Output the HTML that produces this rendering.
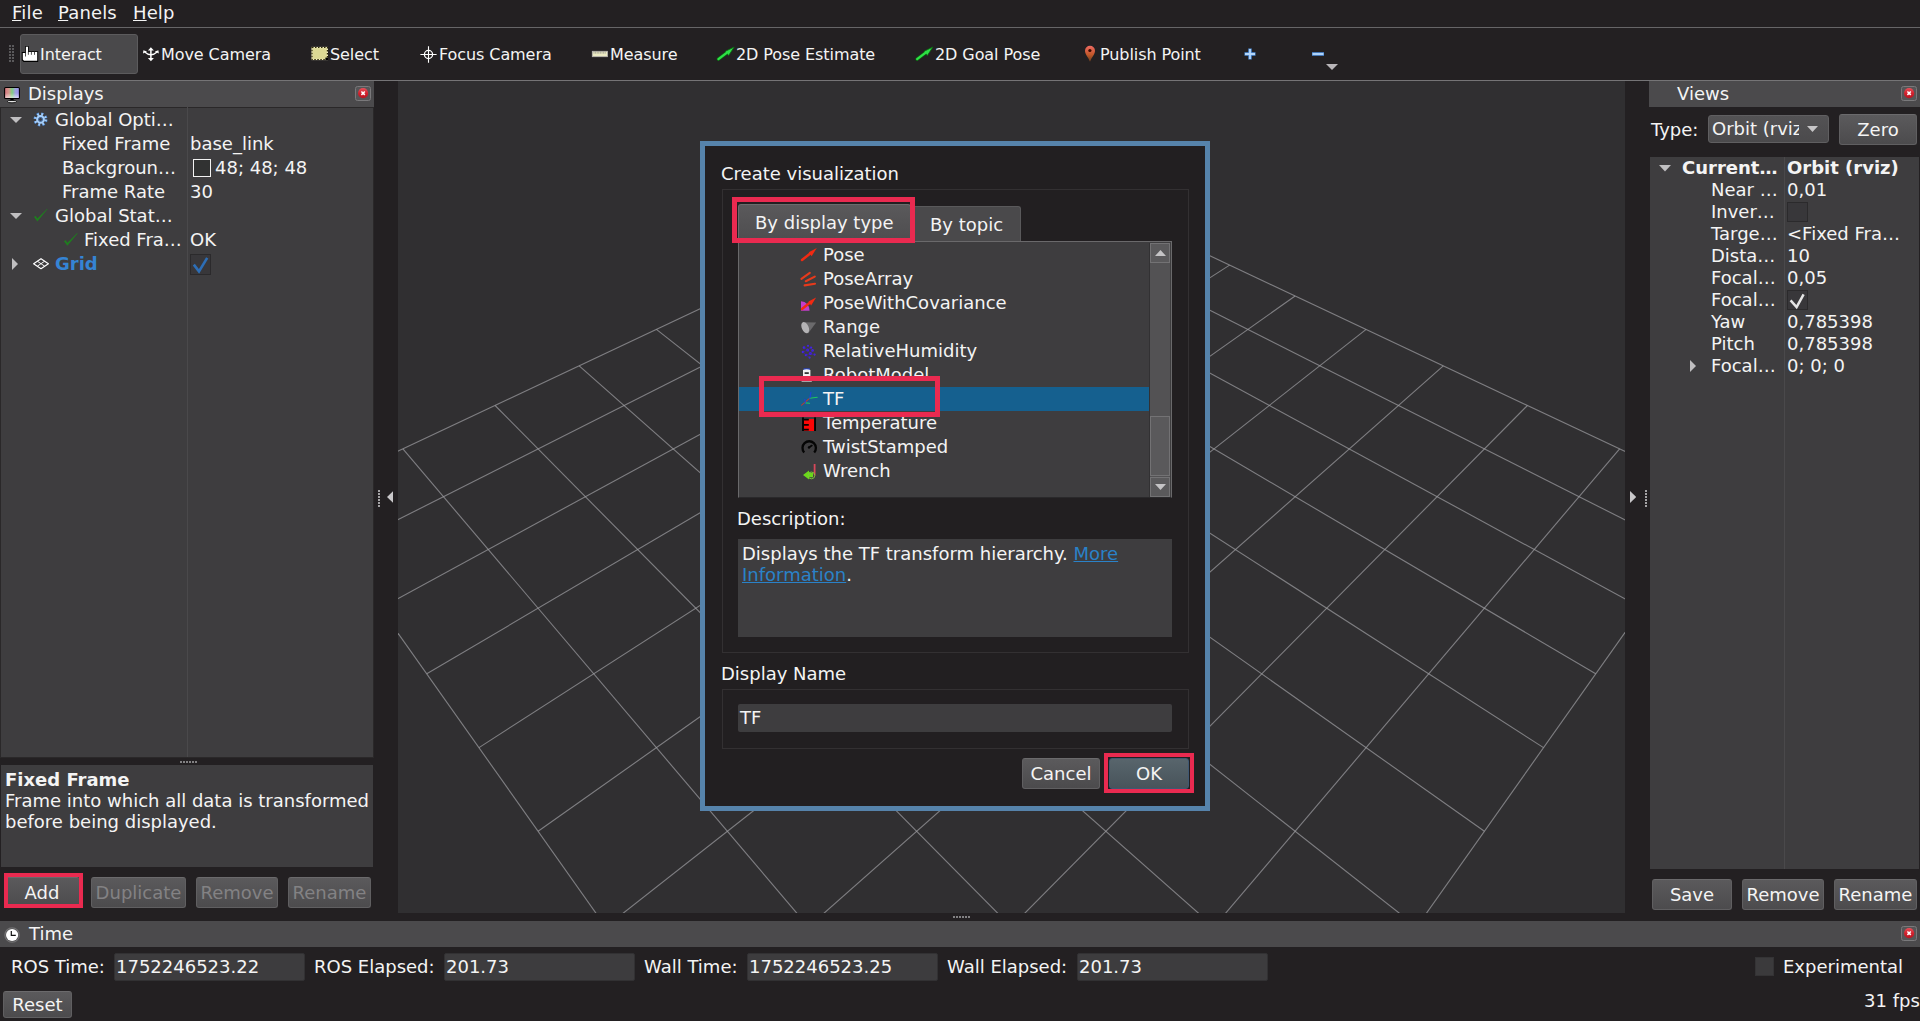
<!DOCTYPE html>
<html><head><meta charset="utf-8"><title>RViz</title>
<style>
html,body{margin:0;padding:0;}
body{width:1920px;height:1021px;overflow:hidden;background:#232022;color:#f4f4f4;font-family:"DejaVu Sans","Liberation Sans",sans-serif;font-size:18px;position:relative;}
body div, body svg{position:absolute;}
.t{white-space:nowrap;}
.b{white-space:nowrap;overflow:hidden;}
u{text-decoration:underline;text-underline-offset:1px;text-decoration-thickness:1px;}
</style></head><body>

<div class="t" style="left:12px;top:4px;font-size:18px;line-height:18px;letter-spacing:0.2px;"><u>F</u>ile</div>
<div class="t" style="left:58px;top:4px;font-size:18px;line-height:18px;letter-spacing:0.15px;"><u>P</u>anels</div>
<div class="t" style="left:133px;top:4px;font-size:18px;line-height:18px;letter-spacing:0.1px;"><u>H</u>elp</div>
<div style="left:0px;top:27px;width:1920px;height:1px;background:#666567"></div>
<div style="left:0px;top:80px;width:1920px;height:1px;background:#757476"></div>
<div style="left:9px;top:45px;width:2px;height:2px;background:#5a595b"></div>
<div style="left:9px;top:48px;width:2px;height:2px;background:#5a595b"></div>
<div style="left:9px;top:51px;width:2px;height:2px;background:#5a595b"></div>
<div style="left:9px;top:54px;width:2px;height:2px;background:#5a595b"></div>
<div style="left:9px;top:57px;width:2px;height:2px;background:#5a595b"></div>
<div style="left:9px;top:60px;width:2px;height:2px;background:#5a595b"></div>
<div style="left:12px;top:45px;width:2px;height:2px;background:#5a595b"></div>
<div style="left:12px;top:48px;width:2px;height:2px;background:#5a595b"></div>
<div style="left:12px;top:51px;width:2px;height:2px;background:#5a595b"></div>
<div style="left:12px;top:54px;width:2px;height:2px;background:#5a595b"></div>
<div style="left:12px;top:57px;width:2px;height:2px;background:#5a595b"></div>
<div style="left:12px;top:60px;width:2px;height:2px;background:#5a595b"></div>
<div style="left:20px;top:34px;width:118px;height:40px;background:#4a494b;border:1px solid #5c5b5d;border-radius:3px;box-sizing:border-box"></div>
<div class="t" style="left:40px;top:47px;font-size:16px;line-height:16px;letter-spacing:-0.08px;">Interact</div>
<div class="t" style="left:161px;top:47px;font-size:16px;line-height:16px;letter-spacing:-0.08px;">Move Camera</div>
<div class="t" style="left:330px;top:47px;font-size:16px;line-height:16px;letter-spacing:-0.08px;">Select</div>
<div class="t" style="left:439px;top:47px;font-size:16px;line-height:16px;letter-spacing:-0.08px;">Focus Camera</div>
<div class="t" style="left:610px;top:47px;font-size:16px;line-height:16px;letter-spacing:-0.08px;">Measure</div>
<div class="t" style="left:736px;top:47px;font-size:16px;line-height:16px;letter-spacing:-0.08px;">2D Pose Estimate</div>
<div class="t" style="left:935px;top:47px;font-size:16px;line-height:16px;letter-spacing:-0.08px;">2D Goal Pose</div>
<div class="t" style="left:1100px;top:47px;font-size:16px;line-height:16px;letter-spacing:-0.08px;">Publish Point</div>
<svg style="left:20px;top:44px" width="20" height="20" viewBox="20 44 20 20"><path d="M25.1 46.6 Q25.1 45.9 25.8 45.9 H28.1 Q28.8 45.9 28.8 46.6 V51.2 H38.2 V62.1 H23.6 L21.8 60.3 V52 H25.1 Z" fill="#000"/><path d="M25.9 46.7 H28 V52 H37.2 V60.7 H24 L22.8 59.5 V52.9 H25.9 Z" fill="#fff"/><path d="M25.5 53 V56.5 M28.4 51.6 V54.8 M31.4 51.6 V54.8 M34.5 51.6 V54.8" stroke="#222" stroke-width=".8"/></svg>
<svg style="left:141px;top:45px" width="20" height="18" viewBox="141 45 20 18"><g fill="#fff" stroke="none"><path d="M150.9 47.2 L153.9 50.5 H147.9 Z"/><path d="M150.9 61.2 L153.9 58 H147.9 Z"/><path d="M143 53.6 L143.4 50.2 L147 51.4 Z"/><path d="M158.8 53.6 L158.4 50.2 L154.8 51.4 Z"/></g><path d="M150.9 49.5 V59" stroke="#fff" stroke-width="1.5"/><path d="M144.8 52 Q150.9 57.6 157 52" fill="none" stroke="#fff" stroke-width="1.4"/></svg>
<svg style="left:310px;top:45px" width="20" height="17" viewBox="310 45 20 17"><rect x="312" y="47.5" width="15.4" height="12" fill="#dcd994"/><rect x="312" y="47.5" width="15.4" height="12" fill="none" stroke="#f3eec6" stroke-width="1.2"/><rect x="312" y="47.5" width="15.4" height="12" fill="none" stroke="#2c2800" stroke-width="1.2" stroke-dasharray="1.5 1.5"/><rect x="325.4" y="57.6" width="2.6" height="2.4" fill="#000"/></svg>
<svg style="left:419px;top:45px" width="20" height="20" viewBox="419 45 20 20"><g fill="none" stroke="#fff"><circle cx="428.5" cy="54.5" r="4.1" stroke-width="1.3"/><path d="M420.4 54.5 H436.6 M428.5 46.3 V62.8" stroke-width="1.1"/></g></svg>
<svg style="left:590px;top:49px" width="20" height="10" viewBox="590 49 20 10"><rect x="592.3" y="51.3" width="15.2" height="5.4" fill="#ecebc4" stroke="#b9b5b2" stroke-width=".8"/><path d="M594 51.5v2.2M595.6 51.5v2.2M597.2 51.5v2.2M598.8 51.5v2.2M600.4 51.5v2.2M602 51.5v2.2M603.6 51.5v2.2M605.2 51.5v2.2" stroke="#8a8783" stroke-width=".6"/></svg>
<svg style="left:716px;top:45px" width="20" height="18" viewBox="716 45 20 18"><path d="M718.4 59.2 L727.0 52.6" stroke="#0b6a12" stroke-width="3.4000000000000004" stroke-linecap="round"/><path d="M734.1999999999999 47.0 L725.4 51.300000000000004 L728.6 55.6 Z" fill="#2ee046" stroke="#0b6a12" stroke-width=".8"/><path d="M718.4 59.2 L727.0 52.6" stroke="#2ee046" stroke-width="2.2" stroke-linecap="round"/></svg>
<svg style="left:915px;top:45px" width="20" height="18" viewBox="915 45 20 18"><path d="M917.1 59.2 L925.7 52.6" stroke="#0b6a12" stroke-width="3.4000000000000004" stroke-linecap="round"/><path d="M932.9 47.0 L924.1 51.300000000000004 L927.3000000000001 55.6 Z" fill="#2ee046" stroke="#0b6a12" stroke-width=".8"/><path d="M917.1 59.2 L925.7 52.6" stroke="#2ee046" stroke-width="2.2" stroke-linecap="round"/></svg>
<svg style="left:1082px;top:44px" width="16" height="20" viewBox="1082 44 16 20"><defs><linearGradient id="pg" x1="0" y1="0" x2="0" y2="1"><stop offset="0" stop-color="#ee6a62"/><stop offset=".55" stop-color="#c4582a"/><stop offset="1" stop-color="#a85a20" stop-opacity=".55"/></linearGradient></defs><path d="M1090 61.8 C1088 56.5 1085 54.5 1085 50.8 A5 5 0 0 1 1095 50.8 C1095 54.5 1092 56.5 1090 61.8 Z" fill="url(#pg)"/><circle cx="1089.9" cy="50.5" r="1.6" fill="#3a0a00"/></svg>
<svg style="left:1243px;top:47px" width="14" height="14" viewBox="1243 47 14 14"><path d="M1244.5 54 H1255.5 M1250 48.5 V59.5" stroke="#4f8fdc" stroke-width="3.4"/><path d="M1245 54 H1255 M1250 49 V59" stroke="#b4d6fa" stroke-width="1.8"/></svg>
<svg style="left:1310px;top:50px" width="16" height="8" viewBox="1310 50 16 8"><path d="M1312 54 H1324" stroke="#4f8fdc" stroke-width="3.6"/><path d="M1312.6 54 H1323.4" stroke="#b4d6fa" stroke-width="1.9"/></svg>
<svg style="left:1326.0px;top:64.0px" width="12" height="6" viewBox="0 0 12 6"><path d="M0 0 H12 L6.0 6 Z" fill="#b9b6b9"/></svg>
<div style="left:0px;top:81px;width:374px;height:26px;background:#4b4a4c"></div>
<div class="t" style="left:28px;top:85px;font-size:18px;line-height:18px;">Displays</div>
<div style="left:355px;top:86px;width:16px;height:15px;background:#565557;border:1px solid #7a797b;box-sizing:border-box;border-radius:2.5px"></div>
<svg style="left:357px;top:87px" width="12" height="12" viewBox="0 0 12 12"><defs><linearGradient id="cg" x1="0" y1="0" x2="0" y2="1"><stop offset="0" stop-color="#e9505a"/><stop offset=".5" stop-color="#d2222e"/><stop offset="1" stop-color="#b81420"/></linearGradient></defs><circle cx="6.1" cy="6.2" r="5.1" fill="url(#cg)"/><path d="M4.4 4.5 L7.8 7.9 M7.8 4.5 L4.4 7.9" stroke="#fff" stroke-width="1.5"/></svg>
<div style="left:0px;top:107px;width:374px;height:651px;background:#2a2829"></div>
<div style="left:1px;top:108px;width:372px;height:649px;background:#3e3d3f"></div>
<div style="left:187px;top:107px;width:1px;height:650px;background:#4a494b"></div>
<div class="t" style="left:55px;top:111px;font-size:18px;line-height:18px;">Global Opti…</div>
<div class="t" style="left:62px;top:135px;font-size:18px;line-height:18px;">Fixed Frame</div>
<div class="t" style="left:190px;top:135px;font-size:18px;line-height:18px;">base_link</div>
<div class="t" style="left:62px;top:159px;font-size:18px;line-height:18px;">Backgroun…</div>
<div class="t" style="left:215px;top:159px;font-size:18px;line-height:18px;">48; 48; 48</div>
<div class="t" style="left:62px;top:183px;font-size:18px;line-height:18px;">Frame Rate</div>
<div class="t" style="left:190px;top:183px;font-size:18px;line-height:18px;">30</div>
<div class="t" style="left:55px;top:207px;font-size:18px;line-height:18px;">Global Stat…</div>
<div class="t" style="left:84px;top:231px;font-size:18px;line-height:18px;">Fixed Fra…</div>
<div class="t" style="left:190px;top:231px;font-size:18px;line-height:18px;">OK</div>
<div class="t" style="left:55px;top:255px;font-size:18px;line-height:18px;color:#3584d4;font-weight:bold;">Grid</div>
<svg style="left:9.5px;top:117.0px" width="12" height="6" viewBox="0 0 12 6"><path d="M0 0 H12 L6.0 6 Z" fill="#c0bfc1"/></svg>
<svg style="left:9.5px;top:213.0px" width="12" height="6" viewBox="0 0 12 6"><path d="M0 0 H12 L6.0 6 Z" fill="#c0bfc1"/></svg>
<svg style="left:12.2px;top:258.0px" width="6" height="12" viewBox="0 0 6 12"><path d="M0 0 V12 L6 6.0 Z" fill="#c0bfc1"/></svg>
<div style="left:193px;top:159px;width:18px;height:18px;background:#313232;border:1.5px solid #f2f2f2;box-sizing:border-box"></div>
<div style="left:190px;top:254px;width:21px;height:21px;background:#38373a;border:1px solid #2b2a2c;box-sizing:border-box"></div>
<svg style="left:191px;top:255px" width="20" height="20" viewBox="0 0 20 20"><path d="M2.8 9.6 L8 16.4 L16.2 2.8" fill="none" stroke="#2d6eb6" stroke-width="2.6"/></svg>
<svg style="left:3px;top:86px" width="18" height="18" viewBox="3 86 18 18"><defs><linearGradient id="mg" x1="0" y1="0" x2="1" y2="0"><stop offset="0" stop-color="#d8737c"/><stop offset=".3" stop-color="#d49a90"/><stop offset=".5" stop-color="#7fd07e"/><stop offset=".72" stop-color="#9fa4dc"/><stop offset="1" stop-color="#9a90ee"/></linearGradient><linearGradient id="mw" x1="0" y1="0" x2="0" y2="1"><stop offset=".5" stop-color="#fff" stop-opacity="0"/><stop offset="1" stop-color="#fff" stop-opacity=".6"/></linearGradient></defs><rect x="4.6" y="87.5" width="14.8" height="11" rx="1" fill="url(#mg)" stroke="#000" stroke-width="1.1"/><rect x="5.2" y="88" width="13.6" height="10" fill="url(#mw)"/><path d="M10.4 99 H13.6 V100.8 H10.4 Z" fill="#000"/><ellipse cx="12" cy="101.6" rx="4.6" ry="1.2" fill="#e8e8e8" stroke="#000" stroke-width=".8"/></svg>
<svg style="left:32px;top:111px" width="17" height="17" viewBox="32 111 17 17"><g fill="none"><circle cx="40.5" cy="119.4" r="5.4" stroke="#4a86d0" stroke-width="3.2" stroke-dasharray="2.2 2.04"/><circle cx="40.5" cy="119.4" r="5.3" stroke="#a8cff8" stroke-width="2.2" stroke-dasharray="1.6 2.56" stroke-dashoffset="-.3"/><circle cx="40.5" cy="119.4" r="3.3" stroke="#a8cff8" stroke-width="2.2"/><circle cx="40.5" cy="119.4" r="1.9" stroke="#3b6fb4" stroke-width=".9"/></g></svg>
<svg style="left:33px;top:206px" width="17" height="17" viewBox="33 206 17 17"><path d="M34 216.9 L35.6 215.70000000000002 L37.4 218.5 L47.2 208.70000000000002 L47.6 209.1 L37.4 221.5 Z" fill="#1f7d1f"/></svg>
<svg style="left:63px;top:231px" width="17" height="17" viewBox="63 231 17 17"><path d="M64 241.2 L65.6 240.0 L67.4 242.79999999999998 L77.2 233.0 L77.6 233.39999999999998 L67.4 245.79999999999998 Z" fill="#1f7d1f"/></svg>
<svg style="left:32px;top:256px" width="18" height="16" viewBox="32 256 18 16"><g fill="none" stroke="#fff" stroke-linejoin="round"><path d="M41 258.7 L48.4 263.7 L41 268.7 L33.6 263.7 Z" stroke-width="1.15"/><path d="M37.3 261.2 L44.7 266.2 M44.7 261.2 L37.3 266.2" stroke-width=".95"/></g></svg>
<div style="left:180px;top:761px;width:2px;height:2px;background:#828183"></div>
<div style="left:183px;top:761px;width:2px;height:2px;background:#828183"></div>
<div style="left:186px;top:761px;width:2px;height:2px;background:#828183"></div>
<div style="left:189px;top:761px;width:2px;height:2px;background:#828183"></div>
<div style="left:192px;top:761px;width:2px;height:2px;background:#828183"></div>
<div style="left:195px;top:761px;width:2px;height:2px;background:#828183"></div>
<div style="left:1px;top:765px;width:372px;height:102px;background:#3e3d3f"></div>
<div class="t" style="left:5px;top:771px;font-size:18px;line-height:18px;font-weight:bold;">Fixed Frame</div>
<div class="t" style="left:5px;top:792px;font-size:18px;line-height:18px;">Frame into which all data is transformed</div>
<div class="t" style="left:5px;top:813px;font-size:18px;line-height:18px;">before being displayed.</div>
<div class="b" style="left:4px;top:877px;width:76px;height:31px;background:linear-gradient(#5b5a5c,#4c4b4d);border:1px solid #605f61;border-top-color:#6b6a6c;border-radius:3px;box-sizing:border-box;color:#f4f4f4;text-align:center;font-size:18px;line-height:29px;">Add</div>
<div class="b" style="left:91px;top:877px;width:95px;height:31px;background:linear-gradient(#5b5a5c,#4c4b4d);border:1px solid #605f61;border-top-color:#6b6a6c;border-radius:3px;box-sizing:border-box;color:#838284;text-align:center;font-size:18px;line-height:29px;">Duplicate</div>
<div class="b" style="left:196px;top:877px;width:82px;height:31px;background:linear-gradient(#5b5a5c,#4c4b4d);border:1px solid #605f61;border-top-color:#6b6a6c;border-radius:3px;box-sizing:border-box;color:#838284;text-align:center;font-size:18px;line-height:29px;">Remove</div>
<div class="b" style="left:288px;top:877px;width:83px;height:31px;background:linear-gradient(#5b5a5c,#4c4b4d);border:1px solid #605f61;border-top-color:#6b6a6c;border-radius:3px;box-sizing:border-box;color:#838284;text-align:center;font-size:18px;line-height:29px;">Rename</div>
<div style="left:3.5px;top:872.5px;width:79.5px;height:35.3px;border:4.5px solid #ea2a50;box-sizing:border-box"></div>
<svg style="left:387.0px;top:491.0px" width="6.2" height="12" viewBox="0 0 6.2 12"><path d="M6.2 0 V12 L0 6.0 Z" fill="#c9c8ca"/></svg>
<svg style="left:1629.9px;top:491.0px" width="6.2" height="12" viewBox="0 0 6.2 12"><path d="M0 0 V12 L6.2 6.0 Z" fill="#c9c8ca"/></svg>
<div style="left:378px;top:490px;width:2px;height:2px;background:#a4a3a5"></div>
<div style="left:1645px;top:490px;width:2px;height:2px;background:#a4a3a5"></div>
<div style="left:378px;top:493px;width:2px;height:2px;background:#a4a3a5"></div>
<div style="left:1645px;top:493px;width:2px;height:2px;background:#a4a3a5"></div>
<div style="left:378px;top:496px;width:2px;height:2px;background:#a4a3a5"></div>
<div style="left:1645px;top:496px;width:2px;height:2px;background:#a4a3a5"></div>
<div style="left:378px;top:499px;width:2px;height:2px;background:#a4a3a5"></div>
<div style="left:1645px;top:499px;width:2px;height:2px;background:#a4a3a5"></div>
<div style="left:378px;top:502px;width:2px;height:2px;background:#a4a3a5"></div>
<div style="left:1645px;top:502px;width:2px;height:2px;background:#a4a3a5"></div>
<div style="left:378px;top:505px;width:2px;height:2px;background:#a4a3a5"></div>
<div style="left:1645px;top:505px;width:2px;height:2px;background:#a4a3a5"></div>
<div style="left:398px;top:81px;width:1227px;height:832px;background:#302f31"></div>
<svg style="left:398px;top:81px;overflow:hidden" width="1227" height="832" viewBox="398 81 1227 832"><g stroke="#a0a0a4" stroke-opacity="0.7" stroke-width="1.12" fill="none"><line x1="1011.2" y1="162.1" x2="1721.0" y2="496.7"/><line x1="1011.2" y1="162.1" x2="301.5" y2="496.7"/><line x1="962.3" y1="185.2" x2="1683.6" y2="549.5"/><line x1="1060.2" y1="185.2" x2="338.9" y2="549.5"/><line x1="909.9" y1="209.9" x2="1642.1" y2="608.2"/><line x1="1112.6" y1="209.9" x2="380.4" y2="608.2"/><line x1="853.5" y1="236.5" x2="1595.7" y2="673.8"/><line x1="1169.0" y1="236.5" x2="426.8" y2="673.8"/><line x1="792.9" y1="265.1" x2="1543.5" y2="747.6"/><line x1="1229.6" y1="265.1" x2="479.0" y2="747.6"/><line x1="727.4" y1="296.0" x2="1484.4" y2="831.3"/><line x1="1295.1" y1="296.0" x2="538.1" y2="831.3"/><line x1="656.4" y1="329.4" x2="1416.8" y2="926.9"/><line x1="1366.1" y1="329.4" x2="605.7" y2="926.9"/><line x1="579.2" y1="365.8" x2="1338.8" y2="1037.2"/><line x1="1443.3" y1="365.8" x2="683.7" y2="1037.2"/><line x1="495.1" y1="405.5" x2="1247.8" y2="1165.8"/><line x1="1527.4" y1="405.5" x2="774.7" y2="1165.8"/><line x1="402.9" y1="448.9" x2="1140.3" y2="1317.9"/><line x1="1619.6" y1="448.9" x2="882.2" y2="1317.9"/><line x1="301.5" y1="496.7" x2="1011.2" y2="1500.4"/><line x1="1721.0" y1="496.7" x2="1011.2" y2="1500.4"/></g></svg>
<div style="left:1649px;top:81px;width:271px;height:26px;background:#4b4a4c"></div>
<div class="t" style="left:1677px;top:85px;font-size:18px;line-height:18px;">Views</div>
<div style="left:1901px;top:86px;width:16px;height:15px;background:#565557;border:1px solid #7a797b;box-sizing:border-box;border-radius:2.5px"></div>
<svg style="left:1903px;top:87px" width="12" height="12" viewBox="0 0 12 12"><defs><linearGradient id="cg" x1="0" y1="0" x2="0" y2="1"><stop offset="0" stop-color="#e9505a"/><stop offset=".5" stop-color="#d2222e"/><stop offset="1" stop-color="#b81420"/></linearGradient></defs><circle cx="6.1" cy="6.2" r="5.1" fill="url(#cg)"/><path d="M4.4 4.5 L7.8 7.9 M7.8 4.5 L4.4 7.9" stroke="#fff" stroke-width="1.5"/></svg>
<div class="t" style="left:1651px;top:121px;font-size:18px;line-height:18px;">Type:</div>
<div style="left:1708px;top:115px;width:121px;height:28px;background:linear-gradient(#535254,#4b4a4c);border:1px solid #605f61;border-radius:3px;box-sizing:border-box"></div>
<div class="t" style="left:1712px;top:120px;font-size:18px;line-height:18px;width:87px;overflow:hidden;">Orbit (rviz</div>
<svg style="left:1807.0px;top:126.0px" width="11" height="6" viewBox="0 0 11 6"><path d="M0 0 H11 L5.5 6 Z" fill="#c6c5c7"/></svg>
<div class="b" style="left:1839px;top:114px;width:78px;height:31px;background:linear-gradient(#5b5a5c,#4c4b4d);border:1px solid #605f61;border-top-color:#6b6a6c;border-radius:3px;box-sizing:border-box;color:#f4f4f4;text-align:center;font-size:18px;line-height:29px;">Zero</div>
<div style="left:1650px;top:157px;width:269px;height:712px;background:#3e3d3f"></div>
<div style="left:1784px;top:157px;width:1px;height:712px;background:#4a494b"></div>
<div class="t" style="left:1682px;top:159px;font-size:18px;line-height:18px;font-weight:bold;">Current…</div>
<div class="t" style="left:1787px;top:159px;font-size:18px;line-height:18px;font-weight:bold;">Orbit (rviz)</div>
<div class="t" style="left:1711px;top:181px;font-size:18px;line-height:18px;">Near …</div>
<div class="t" style="left:1787px;top:181px;font-size:18px;line-height:18px;">0,01</div>
<div class="t" style="left:1711px;top:203px;font-size:18px;line-height:18px;">Inver…</div>
<div class="t" style="left:1711px;top:225px;font-size:18px;line-height:18px;">Targe…</div>
<div class="t" style="left:1787px;top:225px;font-size:18px;line-height:18px;">&lt;Fixed Fra…</div>
<div class="t" style="left:1711px;top:247px;font-size:18px;line-height:18px;">Dista…</div>
<div class="t" style="left:1787px;top:247px;font-size:18px;line-height:18px;">10</div>
<div class="t" style="left:1711px;top:269px;font-size:18px;line-height:18px;">Focal…</div>
<div class="t" style="left:1787px;top:269px;font-size:18px;line-height:18px;">0,05</div>
<div class="t" style="left:1711px;top:291px;font-size:18px;line-height:18px;">Focal…</div>
<div class="t" style="left:1711px;top:313px;font-size:18px;line-height:18px;">Yaw</div>
<div class="t" style="left:1787px;top:313px;font-size:18px;line-height:18px;">0,785398</div>
<div class="t" style="left:1711px;top:335px;font-size:18px;line-height:18px;">Pitch</div>
<div class="t" style="left:1787px;top:335px;font-size:18px;line-height:18px;">0,785398</div>
<div class="t" style="left:1711px;top:357px;font-size:18px;line-height:18px;">Focal…</div>
<div class="t" style="left:1787px;top:357px;font-size:18px;line-height:18px;">0; 0; 0</div>
<svg style="left:1658.5px;top:165.05px" width="12" height="6.5" viewBox="0 0 12 6.5"><path d="M0 0 H12 L6.0 6.5 Z" fill="#c0bfc1"/></svg>
<svg style="left:1690.0px;top:360.0px" width="6" height="12" viewBox="0 0 6 12"><path d="M0 0 V12 L6 6.0 Z" fill="#c0bfc1"/></svg>
<div style="left:1787px;top:202px;width:21px;height:20px;background:#38373a;border:1px solid #2b2a2c;box-sizing:border-box"></div>
<div style="left:1787px;top:290px;width:21px;height:20px;background:#38373a;border:1px solid #2b2a2c;box-sizing:border-box"></div>
<svg style="left:1788px;top:290px" width="20" height="20" viewBox="0 0 20 20"><path d="M2.6 10.4 L8.6 17 L15.6 4.4" fill="none" stroke="#e4e4e4" stroke-width="2.5"/></svg>
<div class="b" style="left:1652px;top:879px;width:80px;height:31px;background:linear-gradient(#5b5a5c,#4c4b4d);border:1px solid #605f61;border-top-color:#6b6a6c;border-radius:3px;box-sizing:border-box;color:#f4f4f4;text-align:center;font-size:18px;line-height:29px;">Save</div>
<div class="b" style="left:1742px;top:879px;width:82px;height:31px;background:linear-gradient(#5b5a5c,#4c4b4d);border:1px solid #605f61;border-top-color:#6b6a6c;border-radius:3px;box-sizing:border-box;color:#f4f4f4;text-align:center;font-size:18px;line-height:29px;">Remove</div>
<div class="b" style="left:1834px;top:879px;width:83px;height:31px;background:linear-gradient(#5b5a5c,#4c4b4d);border:1px solid #605f61;border-top-color:#6b6a6c;border-radius:3px;box-sizing:border-box;color:#f4f4f4;text-align:center;font-size:18px;line-height:29px;">Rename</div>
<div style="left:953px;top:916px;width:2px;height:2px;background:#828183"></div>
<div style="left:956px;top:916px;width:2px;height:2px;background:#828183"></div>
<div style="left:959px;top:916px;width:2px;height:2px;background:#828183"></div>
<div style="left:962px;top:916px;width:2px;height:2px;background:#828183"></div>
<div style="left:965px;top:916px;width:2px;height:2px;background:#828183"></div>
<div style="left:968px;top:916px;width:2px;height:2px;background:#828183"></div>
<div style="left:0px;top:921px;width:1920px;height:26px;background:#4b4a4c"></div>
<svg style="left:4px;top:927px" width="16" height="16" viewBox="4 927 16 16"><circle cx="12.1" cy="935" r="7.2" fill="none" stroke="#fff" stroke-opacity=".22" stroke-width="1.2"/><circle cx="12.1" cy="935" r="6.1" fill="#fff"/><path d="M11.3 931 V935.4 H15.8" fill="none" stroke="#111" stroke-width="1.2"/></svg>
<div class="t" style="left:29px;top:925px;font-size:18px;line-height:18px;">Time</div>
<div style="left:1901px;top:926px;width:16px;height:15px;background:#565557;border:1px solid #7a797b;box-sizing:border-box;border-radius:2.5px"></div>
<svg style="left:1903px;top:927px" width="12" height="12" viewBox="0 0 12 12"><defs><linearGradient id="cg" x1="0" y1="0" x2="0" y2="1"><stop offset="0" stop-color="#e9505a"/><stop offset=".5" stop-color="#d2222e"/><stop offset="1" stop-color="#b81420"/></linearGradient></defs><circle cx="6.1" cy="6.2" r="5.1" fill="url(#cg)"/><path d="M4.4 4.5 L7.8 7.9 M7.8 4.5 L4.4 7.9" stroke="#fff" stroke-width="1.5"/></svg>
<div class="t" style="left:11px;top:958px;font-size:18px;line-height:18px;">ROS Time:</div>
<div style="left:114px;top:953px;width:191px;height:28px;background:#3d3c3e;border:1px solid #323133;box-sizing:border-box;border-radius:2px"></div>
<div class="t" style="left:116px;top:958px;font-size:18px;line-height:18px;">1752246523.22</div>
<div class="t" style="left:314px;top:958px;font-size:18px;line-height:18px;">ROS Elapsed:</div>
<div style="left:444px;top:953px;width:191px;height:28px;background:#3d3c3e;border:1px solid #323133;box-sizing:border-box;border-radius:2px"></div>
<div class="t" style="left:446px;top:958px;font-size:18px;line-height:18px;">201.73</div>
<div class="t" style="left:644px;top:958px;font-size:18px;line-height:18px;">Wall Time:</div>
<div style="left:747px;top:953px;width:191px;height:28px;background:#3d3c3e;border:1px solid #323133;box-sizing:border-box;border-radius:2px"></div>
<div class="t" style="left:749px;top:958px;font-size:18px;line-height:18px;">1752246523.25</div>
<div class="t" style="left:947px;top:958px;font-size:18px;line-height:18px;">Wall Elapsed:</div>
<div style="left:1077px;top:953px;width:191px;height:28px;background:#3d3c3e;border:1px solid #323133;box-sizing:border-box;border-radius:2px"></div>
<div class="t" style="left:1079px;top:958px;font-size:18px;line-height:18px;">201.73</div>
<div style="left:1755px;top:957px;width:19px;height:19px;background:#3b3a3c;border:1px solid #343335;box-sizing:border-box"></div>
<div class="t" style="left:1783px;top:958px;font-size:18px;line-height:18px;">Experimental</div>
<div class="b" style="left:3px;top:991px;width:69px;height:27px;background:linear-gradient(#5b5a5c,#4c4b4d);border:1px solid #605f61;border-top-color:#6b6a6c;border-radius:3px;box-sizing:border-box;color:#f4f4f4;text-align:center;font-size:18px;line-height:25px;">Reset</div>
<div class="t" style="left:1864px;top:992px;font-size:18px;line-height:18px;">31 fps</div>
<div style="left:700px;top:141px;width:510px;height:670px;background:#221f21;border:5px solid #5683ab;box-sizing:border-box"></div>
<div class="t" style="left:721px;top:165px;font-size:18px;line-height:18px;">Create visualization</div>
<div style="left:722px;top:189px;width:467px;height:464px;border:1px solid #333032;box-sizing:border-box"></div>
<div style="left:738px;top:204px;width:173px;height:38px;background:linear-gradient(#5a595b,#4e4d4f);border:1px solid #6c6b6d;border-bottom:none;box-sizing:border-box;border-radius:3px 3px 0 0"></div>
<div class="t" style="left:755px;top:214px;font-size:18px;line-height:18px;">By display type</div>
<div style="left:911px;top:206px;width:110px;height:36px;background:#4a494b;border:1px solid #5a595b;border-bottom:none;box-sizing:border-box;border-radius:3px 3px 0 0"></div>
<div class="t" style="left:930px;top:216px;font-size:18px;line-height:18px;">By topic</div>
<div style="left:738px;top:241px;width:434px;height:257px;background:#3e3d3f;border:1px solid #6a696b;border-bottom-color:#2a292b;box-sizing:border-box"></div>
<div style="left:739px;top:387px;width:411px;height:24px;background:#15608f"></div>
<div class="t" style="left:823px;top:246px;font-size:18px;line-height:18px;">Pose</div>
<div class="t" style="left:823px;top:270px;font-size:18px;line-height:18px;">PoseArray</div>
<div class="t" style="left:823px;top:294px;font-size:18px;line-height:18px;">PoseWithCovariance</div>
<div class="t" style="left:823px;top:318px;font-size:18px;line-height:18px;">Range</div>
<div class="t" style="left:823px;top:342px;font-size:18px;line-height:18px;">RelativeHumidity</div>
<div class="t" style="left:823px;top:366px;font-size:18px;line-height:18px;">RobotModel</div>
<div class="t" style="left:823px;top:390px;font-size:18px;line-height:18px;">TF</div>
<div class="t" style="left:823px;top:414px;font-size:18px;line-height:18px;">Temperature</div>
<div class="t" style="left:823px;top:438px;font-size:18px;line-height:18px;">TwistStamped</div>
<div class="t" style="left:823px;top:462px;font-size:18px;line-height:18px;">Wrench</div>
<div style="left:1149px;top:243px;width:21px;height:254px;background:#535254;border-left:1px solid #323133;box-sizing:border-box"></div>
<div style="left:1150px;top:243px;width:20px;height:20px;background:#5a595b;border:1px solid #737274;box-sizing:border-box"></div>
<svg style="left:1154.5px;top:250.0px" width="11" height="6" viewBox="0 0 11 6"><path d="M0 6 H11 L5.5 0 Z" fill="#c4c3c5"/></svg>
<div style="left:1150px;top:416px;width:20px;height:60px;background:#5a595b;border:1px solid #737274;box-sizing:border-box"></div>
<div style="left:1150px;top:477px;width:20px;height:20px;background:#5a595b;border:1px solid #737274;box-sizing:border-box"></div>
<svg style="left:1154.5px;top:484.0px" width="11" height="6" viewBox="0 0 11 6"><path d="M0 0 H11 L5.5 6 Z" fill="#c4c3c5"/></svg>
<svg style="left:800px;top:246.39999999999998px" width="20" height="18" viewBox="800 246.39999999999998 20 18"><path d="M802 260.4 L810.2 253.9" stroke="#f22a12" stroke-width="2.5" stroke-linecap="round"/><path d="M816.8 248.4 L808.8 252.6 L811.6 256.6 Z" fill="#f22a12"/></svg>
<svg style="left:799px;top:270px" width="19" height="18" viewBox="799 270 19 18"><g stroke="#e63a1c" stroke-width="2.1" stroke-linecap="round"><path d="M801.4 278.8 L809.8 272.8"/><path d="M805.8 281.2 L814.8 276.6"/><path d="M804.6 285.4 L815 283.7"/></g></svg>
<svg style="left:800px;top:298px" width="18" height="16" viewBox="800 298 18 16"><path d="M801 301.2 A9 9 0 0 1 809.6 310.8 H801 Z" fill="#c23ecb"/></svg>
<svg style="left:800px;top:295.2px" width="20" height="18" viewBox="800 295.2 20 18"><path d="M802 309.2 L809.8 303.0" stroke="#f22a12" stroke-width="2.4" stroke-linecap="round"/><path d="M816.1 297.8 L808.5 301.8 L811.1 305.6 Z" fill="#f22a12"/></svg>
<svg style="left:800px;top:320px" width="18" height="16" viewBox="800 320 18 16"><path d="M805 322.2 L816.2 322.4 L808 333.4 Z" fill="#6b6a6c"/><ellipse cx="805.2" cy="327.6" rx="3.4" ry="5.9" transform="rotate(-24 805.2 327.6)" fill="#b4b3b5"/></svg>
<svg style="left:800px;top:343px" width="18" height="17" viewBox="800 343 18 17"><g fill="#4524e2"><circle cx="808" cy="345.8" r="1.1"/><circle cx="804" cy="347.6" r="1.3"/><circle cx="811" cy="347.6" r="1.2"/><circle cx="807.6" cy="350" r="1.5"/><circle cx="803" cy="352" r="1.3"/><circle cx="812.6" cy="350.4" r="1.3"/><circle cx="810.4" cy="353.6" r="1.5"/><circle cx="806" cy="355" r="1.3"/><circle cx="814.6" cy="354.6" r="1.1"/><circle cx="809.6" cy="357.6" r="1.1"/></g><g stroke="#3a1fc0" stroke-width=".7" opacity=".8" fill="none"><path d="M804 347.6L807.6 350L811 347.6M807.6 350L810.4 353.6L806 355L803 352L807.6 350M810.4 353.6L812.6 350.4M810.4 353.6L814.6 354.6M806 355L809.6 357.6"/></g></svg>
<svg style="left:800px;top:366px" width="14" height="18" viewBox="800 366 14 18"><path d="M803.6 368.4 H809.8 V370 H803.6 Z" fill="#2848d8"/><path d="M803 370 Q806.7 368.6 810.4 370 V376.4 H803 Z" fill="#f2f2f2"/><path d="M804.6 372.2 H808.8 V374 H804.6 Z" fill="#333"/><path d="M801.6 378.2 H811.8 V381.6 H801.6 Z" fill="#ececec"/><path d="M803.4 379 v2 M806.7 379 v2 M810 379 v2" stroke="#444" stroke-width=".8"/></svg>
<svg style="left:800px;top:390px" width="19" height="17" viewBox="800 390 19 17"><g fill="none" stroke-width="1.1" stroke-linecap="round" opacity=".9"><path d="M809.8 398.2 L801.6 405.2" stroke="#c8382e"/><path d="M809.8 398.2 L817.2 397.2" stroke="#22d45a"/><path d="M809.8 398.2 L810.9 392.4" stroke="#1f3ee8"/><path d="M805.4 402.9 L809.6 403.2" stroke="#22d45a"/><path d="M805.4 402.9 L804.8 399.2" stroke="#1f3ee8"/></g></svg>
<svg style="left:801px;top:416px" width="16" height="16" viewBox="801 416 16 16"><rect x="803.6" y="419" width="10.8" height="12" fill="#fb0606"/><rect x="802" y="417.4" width="2" height="13.6" fill="#050505"/><rect x="814.1" y="417.4" width="1.9" height="13.6" fill="#050505"/><path d="M804 419.6 H808.8 M804 424.9 H808.8 M804 429.6 H808.8" stroke="#0a0000" stroke-width="1.9"/></svg>
<svg style="left:800px;top:438px" width="18" height="17" viewBox="800 438 18 17"><path d="M804.2 452.4 A6.7 6.7 0 1 1 814.2 452.4" fill="none" stroke="#050505" stroke-width="2.3"/><path d="M809 447.4 L811.8 445.6" stroke="#050505" stroke-width="1.8" stroke-linecap="round"/><circle cx="809" cy="447.4" r="1.2" fill="#050505"/></svg>
<svg style="left:800px;top:462px" width="18" height="18" viewBox="800 462 18 18"><path d="M814.6 464 V475.4" stroke="#d8485a" stroke-width="1.8"/><path d="M803 475 L809 470.6 V472.8 H813 V477.2 H809 V479.4 Z" fill="#6ad81a"/><circle cx="811.4" cy="475.4" r="3.4" fill="none" stroke="#7ec83a" stroke-width=".9"/></svg>
<div style="left:732px;top:196.5px;width:183px;height:46.5px;border:5px solid #ea2a50;box-sizing:border-box"></div>
<div style="left:759px;top:376px;width:181px;height:41px;border:5px solid #ea2a50;box-sizing:border-box"></div>
<div class="t" style="left:737px;top:510px;font-size:18px;line-height:18px;">Description:</div>
<div style="left:738px;top:539px;width:434px;height:98px;background:#3e3d3f"></div>
<div class="t" style="left:742px;top:543px;font-size:18px;line-height:21px;white-space:normal;width:425px">Displays the TF transform hierarchy. <span style="color:#2a82c8;text-decoration:underline">More Information</span>.</div>
<div class="t" style="left:721px;top:665px;font-size:18px;line-height:18px;">Display Name</div>
<div style="left:722px;top:689px;width:467px;height:60px;border:1px solid #333032;box-sizing:border-box"></div>
<div style="left:738px;top:704px;width:434px;height:28px;background:#3e3d3f;border-radius:2px"></div>
<div class="t" style="left:740px;top:709px;font-size:18px;line-height:18px;">TF</div>
<div class="b" style="left:1022px;top:758px;width:78px;height:31px;background:linear-gradient(#5b5a5c,#4c4b4d);border:1px solid #605f61;border-top-color:#6b6a6c;border-radius:3px;box-sizing:border-box;color:#f4f4f4;text-align:center;font-size:18px;line-height:29px;">Cancel</div>
<div class="b" style="left:1109px;top:758px;width:80px;height:31px;background:linear-gradient(#5b5a5c,#4c4b4d);border:1px solid #605f61;border-top-color:#6b6a6c;border-radius:3px;box-sizing:border-box;color:#f4f4f4;text-align:center;font-size:18px;line-height:29px;background:linear-gradient(#58656c,#48545b);border-color:#3f5873;">OK</div>
<div style="left:1104px;top:753px;width:90px;height:40px;border:4px solid #ea2a50;box-sizing:border-box"></div>
</body></html>
